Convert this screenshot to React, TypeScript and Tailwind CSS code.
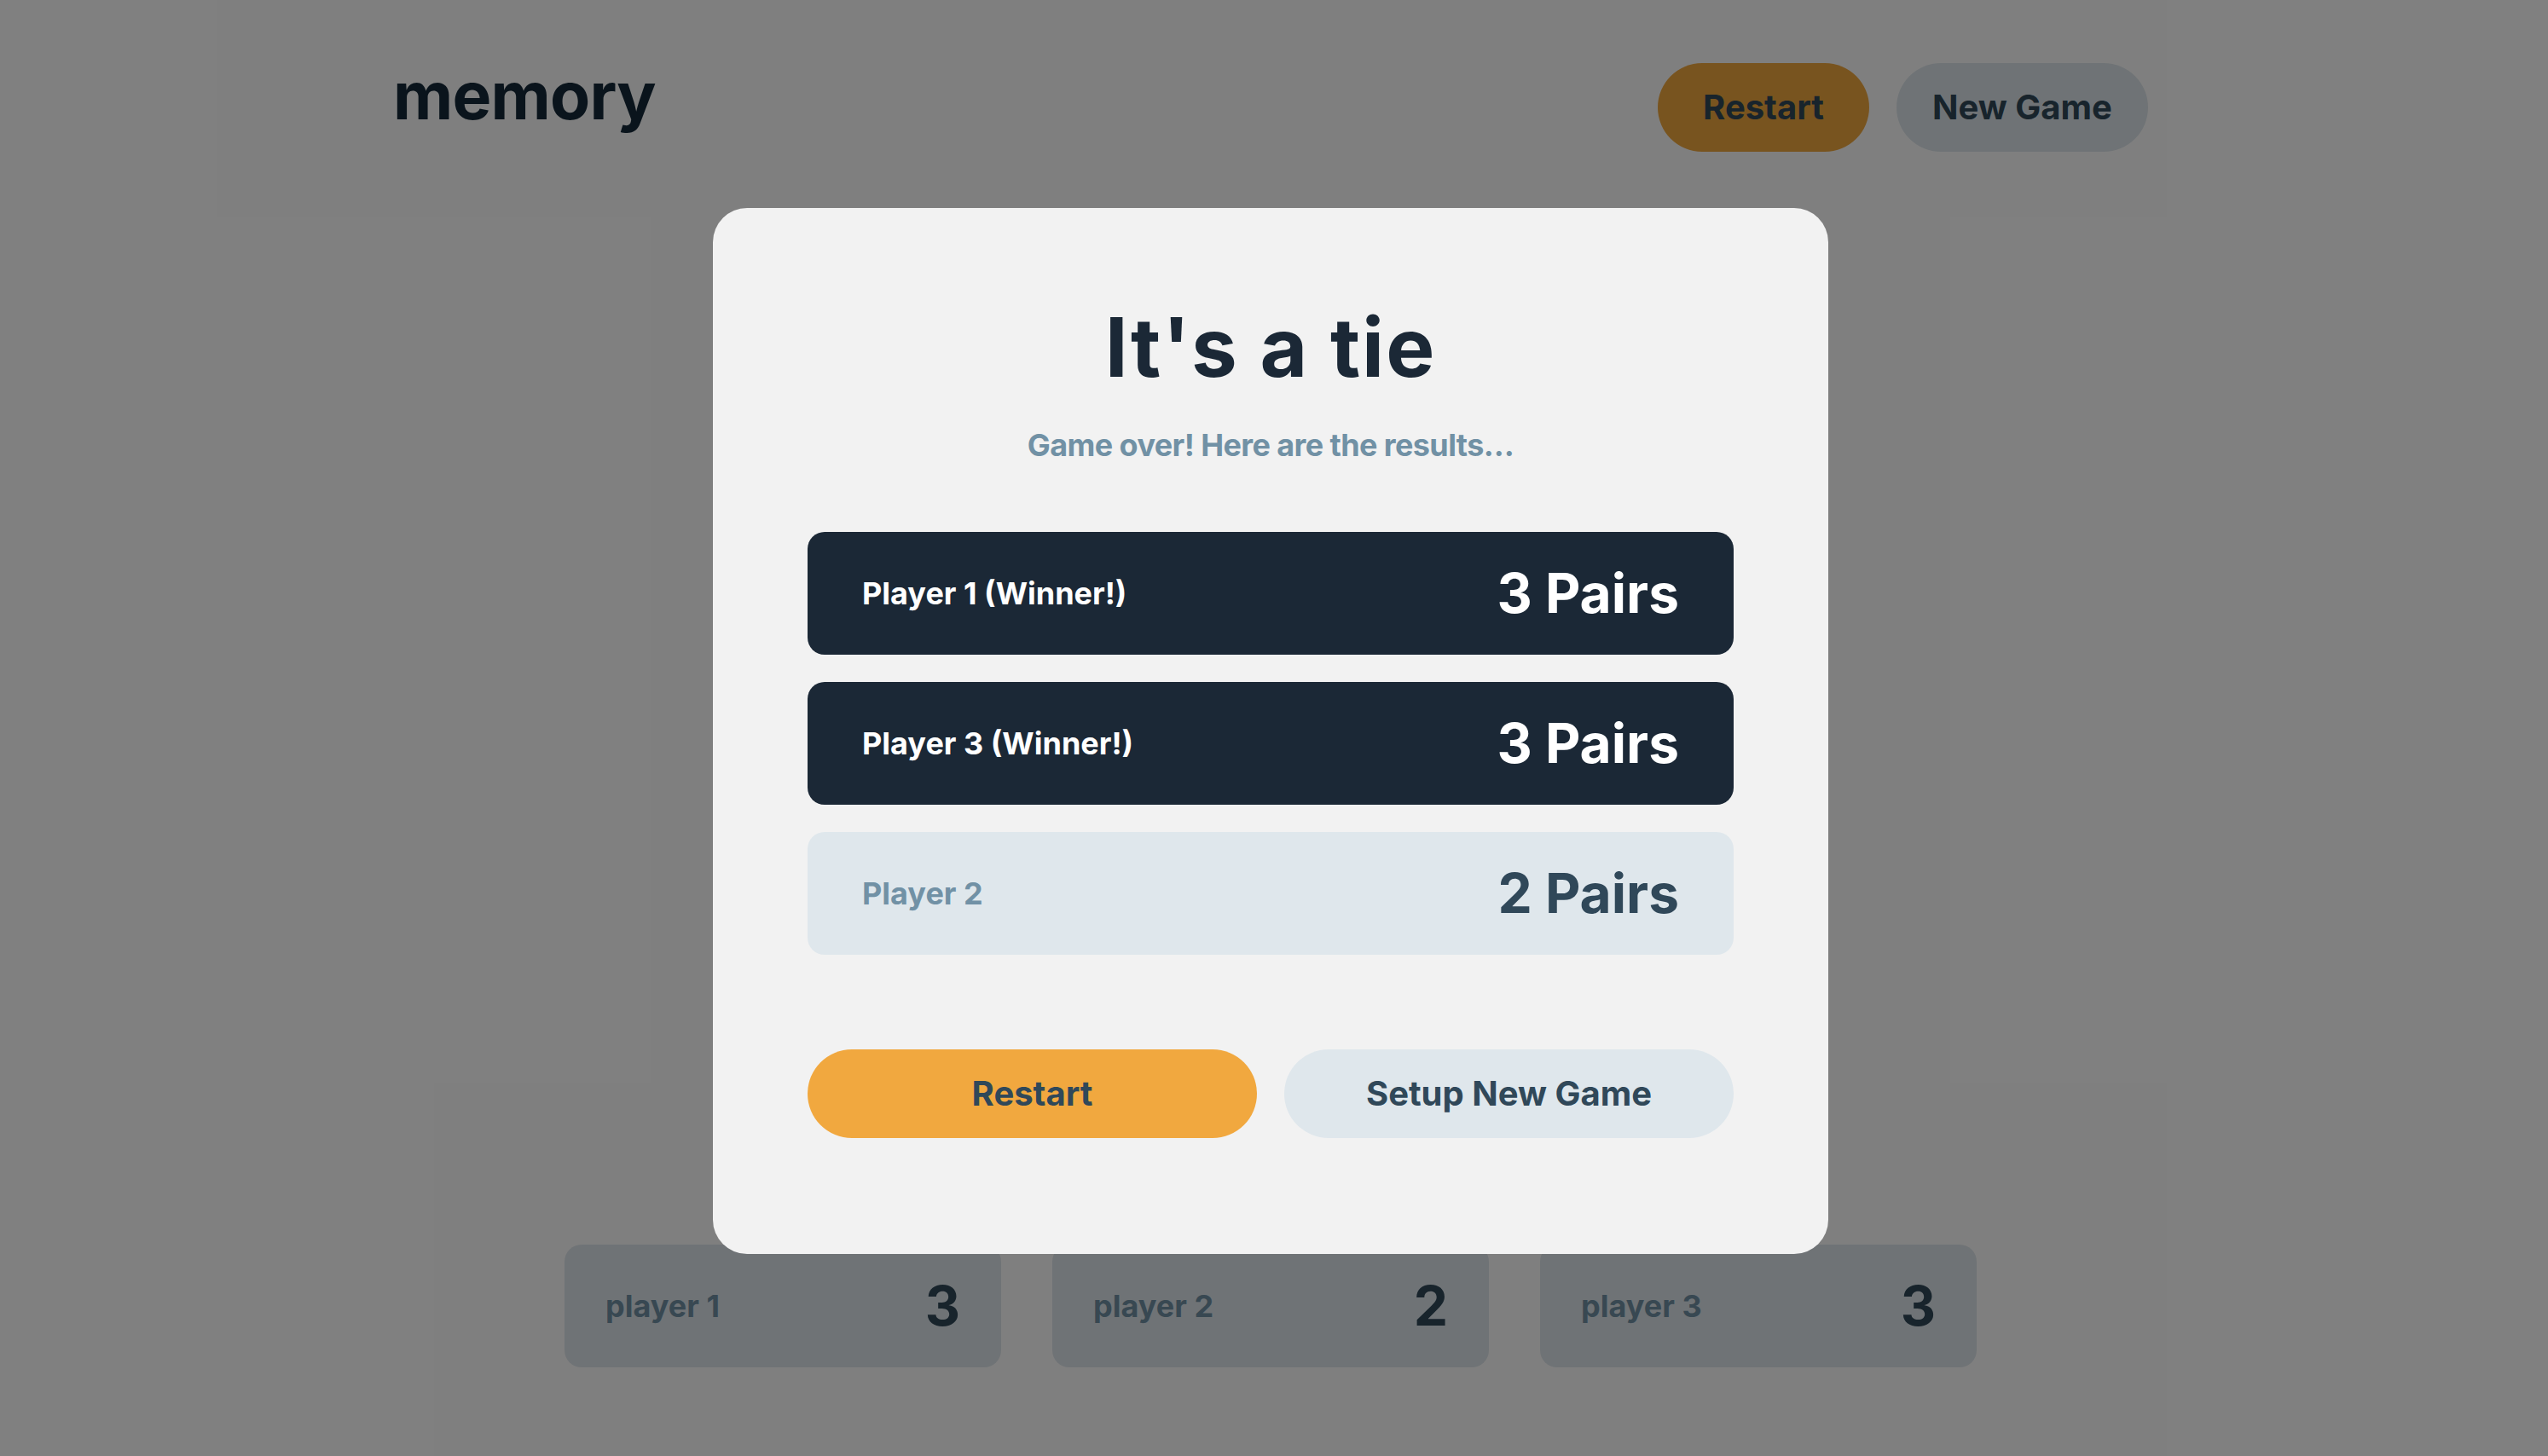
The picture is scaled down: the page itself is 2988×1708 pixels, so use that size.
import React from 'react';

type Result = { name: string; pairs: number; winner: boolean };

const results: Result[] = [
  { name: 'Player 1', pairs: 3, winner: true },
  { name: 'Player 3', pairs: 3, winner: true },
  { name: 'Player 2', pairs: 2, winner: false },
];

const players = [
  { name: 'player 1', score: 3 },
  { name: 'player 2', score: 2 },
  { name: 'player 3', score: 3 },
];

const ResultRow: React.FC<{ result: Result }> = ({ result }) => (
  <div
    className={
      result.winner
        ? 'h-[144px] rounded-[20px] bg-[#1B2836] px-16 flex items-center justify-between'
        : 'h-[144px] rounded-[20px] bg-[#DFE7EC] px-16 flex items-center justify-between'
    }
  >
    <span
      className={
        result.winner
          ? 'text-[36px] leading-[36px] font-bold text-white'
          : 'text-[36px] leading-[36px] font-bold text-[#7191A5]'
      }
    >
      {result.name}
      {result.winner ? ' (Winner!)' : ''}
    </span>
    <span
      className={
        result.winner
          ? 'text-[64px] leading-[64px] font-bold text-white'
          : 'text-[64px] leading-[64px] font-bold text-[#304859]'
      }
    >
      {result.pairs} Pairs
    </span>
  </div>
);

const App: React.FC = () => {
  return (
    <div className="relative w-full h-[1708px] overflow-hidden bg-white font-['Inter',sans-serif]">
      <div className="h-full pr-2 flex flex-col">
        <header className="w-[2058px] mx-auto pt-[73px] flex items-start justify-between">
          <h1 className="text-[77px] leading-[78px] font-bold text-[#152938] tracking-[-0.8px]">memory</h1>
          <div className="mt-px flex gap-8">
            <button className="w-[248px] h-[104px] rounded-full bg-[#F1A83F] text-[40px] leading-[40px] font-bold text-[#304859]">
              Restart
            </button>
            <button className="w-[295px] h-[104px] rounded-full bg-[#DFE7EC] text-[40px] leading-[40px] font-bold text-[#304859]">
              New Game
            </button>
          </div>
        </header>

        <div className="mt-auto mb-[104px] flex justify-center gap-[60px]">
          {players.map((p) => (
            <div
              key={p.name}
              className="w-[512px] h-[144px] rounded-[20px] bg-[#DFE7EC] px-12 flex items-center justify-between"
            >
              <span className="text-[36px] leading-[36px] font-bold text-[#7191A5]">{p.name}</span>
              <span className="text-[64px] leading-[64px] font-bold text-[#304859]">{p.score}</span>
            </div>
          ))}
        </div>
      </div>

      <div className="absolute inset-0 bg-black/50 pr-2 pt-[7px] flex items-center justify-center">
        <div className="w-[1308px] rounded-[40px] bg-[#F2F2F2] px-[111px] pt-[115px] pb-[136px] flex flex-col">
          <h2 className="text-center text-[96px] leading-[96px] font-bold text-[#1B2836] tracking-[2px]">
            It's a tie
          </h2>
          <p className="mt-[49px] text-center text-[36px] leading-[36px] font-bold text-[#7191A5] tracking-[-0.6px]">
            Game over! Here are the results…
          </p>
          <div className="mt-[84px] flex flex-col gap-8">
            {results.map((r) => (
              <ResultRow key={r.name} result={r} />
            ))}
          </div>
          <div className="mt-[111px] grid grid-cols-2 gap-8">
            <button className="h-[104px] rounded-full bg-[#F1A83F] text-[40px] leading-[40px] font-bold text-[#304859]">
              Restart
            </button>
            <button className="h-[104px] rounded-full bg-[#DFE7EC] text-[40px] leading-[40px] font-bold text-[#304859]">
              Setup New Game
            </button>
          </div>
        </div>
      </div>
    </div>
  );
};

export default App;
